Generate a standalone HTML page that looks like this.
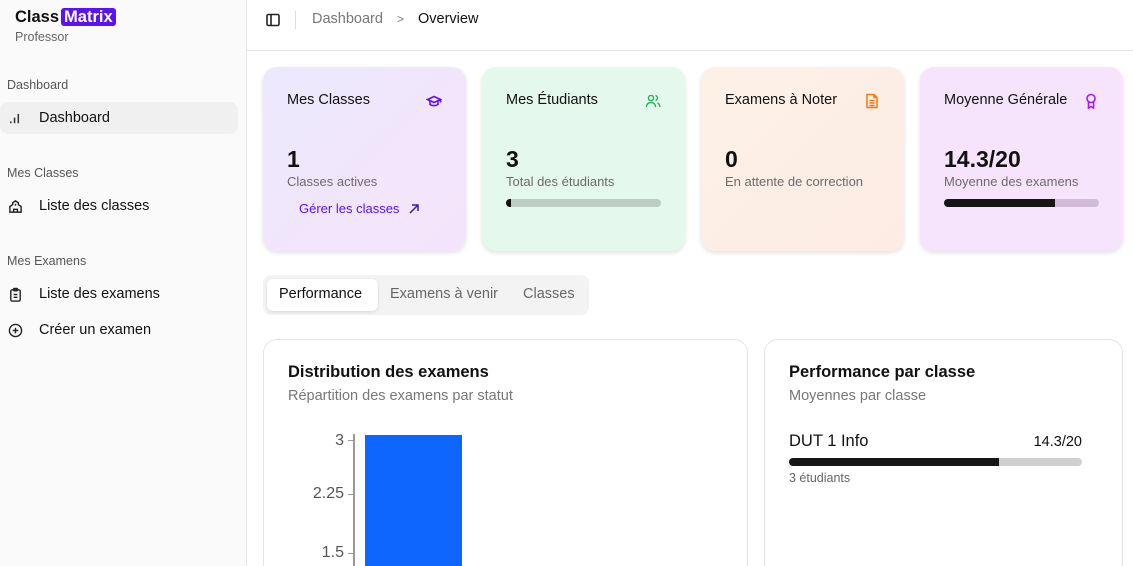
<!DOCTYPE html>
<html style="width:1133px;height:566px;overflow:hidden"><head><meta charset="utf-8"><style>
*{box-sizing:border-box;margin:0;padding:0}
body{width:1133px;height:566px;overflow:hidden;font-family:"Liberation Sans","Noto Sans CJK SC",sans-serif;background:#fff;color:#111;position:relative}
.sb{position:absolute;left:0;top:0;width:247px;height:566px;background:#fafafa;border-right:1px solid #e5e5e5}
.abs{position:absolute}
.logo{left:15px;top:8px;font-weight:bold;font-size:16.5px}
.logo span{background:#5b12f5;color:#fff;border-radius:3px;padding:0 3px;margin-left:2px}
.grp{font-size:12.5px;color:#555;left:7px}
.item{left:0;width:238px;height:32px;font-size:14.5px;display:flex;align-items:center;padding-left:8px}
.item svg{width:15px;height:15px;margin-right:16px}
.card{position:absolute;top:67px;width:203px;height:184px;border-radius:14px;box-shadow:0 2px 5px rgba(0,0,0,.12)}
.card .t{position:absolute;left:24px;top:25px;font-size:14.5px}
.card .ic{position:absolute;right:24px;top:26px;width:16px;height:16px}
.card .n{position:absolute;left:24px;top:79px;font-size:23px;font-weight:bold}
.card .s{position:absolute;left:24px;top:107px;font-size:13px;color:#6b6b6b}
.bar{position:absolute;left:24px;top:132px;width:155px;height:8px;border-radius:4px;overflow:hidden}
.panel{position:absolute;top:339px;border:1px solid #e3e3e3;border-radius:14px;height:240px;background:#fff}
</style></head><body>
<div class="sb">
<div class="abs logo">Class<span>Matrix</span></div>
<div class="abs" style="left:15px;top:30px;font-size:12.5px;color:#666">Professor</div>
<div class="abs grp" style="top:78px">Dashboard</div>
<div class="abs item" style="top:102px;background:#f0f0f0;border-radius:8px"><svg viewBox="0 0 16 16" fill="none" stroke="#333" stroke-width="1.6"><path d="M3 13v-2M7 13V7M11 13V3"/></svg>Dashboard</div>
<div class="abs grp" style="top:166px">Mes Classes</div>
<div class="abs item" style="top:190px"><svg viewBox="0 0 16 16" fill="none" stroke="#222" stroke-width="1.5"><path d="M2 14V8l3-2V4l3-2 3 2v2l3 2v6zM6 14v-3h4v3M8 5v2"/></svg>Liste des classes</div>
<div class="abs grp" style="top:254px">Mes Examens</div>
<div class="abs item" style="top:278px"><svg viewBox="0 0 16 16" fill="none" stroke="#222" stroke-width="1.5"><rect x="3" y="3" width="10" height="12" rx="1.5"/><rect x="6" y="1.5" width="4" height="2.5" rx=".5"/><path d="M6 8h4M6 11h4"/></svg>Liste des examens</div>
<div class="abs item" style="top:314px"><svg viewBox="0 0 16 16" fill="none" stroke="#222" stroke-width="1.5"><circle cx="8" cy="8" r="6.5"/><path d="M8 5v6M5 8h6"/></svg>Créer un examen</div>
</div>
<div class="abs" style="left:247px;top:50px;width:886px;border-top:1px solid #e5e5e5"></div>
<svg class="abs" style="left:265px;top:12px" width="16" height="16" viewBox="0 0 16 16" fill="none" stroke="#222" stroke-width="1.6"><rect x="2" y="2.5" width="12" height="11" rx="1.5"/><path d="M6 2.5v11"/></svg>
<div class="abs" style="left:295px;top:11px;height:18px;border-left:1px solid #ddd"></div>
<div class="abs" style="left:312px;top:11px;font-size:14.5px;color:#777">Dashboard <span style="margin:0 10px;font-size:12px">&gt;</span> <span style="color:#111">Overview</span></div>

<div class="card" style="left:263px;background:linear-gradient(135deg,#ece9fd,#f5e4fb)">
<div class="t">Mes Classes</div>
<svg class="ic" viewBox="0 0 16 16" fill="none" stroke="#5b12f5" stroke-width="1.6"><path d="M1.5 6.5 8 3.5l6.5 3L8 9.5zM4 8v3.5c2.5 1.5 5.5 1.5 8 0V8M14.5 6.5v3"/></svg>
<div class="n">1</div><div class="s">Classes actives</div>
<div class="abs" style="left:36px;top:134px;font-size:13px;color:#5b12f5">Gérer les classes</div>
<svg class="abs" style="left:145px;top:136px" width="12" height="12" viewBox="0 0 12 12" fill="none" stroke="#3b1aa5" stroke-width="1.5"><path d="M2 10 10 2M4 2h6v6"/></svg>
</div>
<div class="card" style="left:482px;background:#e5f8ee">
<div class="t">Mes Étudiants</div>
<svg class="ic" viewBox="0 0 16 16" fill="none" stroke="#22b455" stroke-width="1.4"><circle cx="6" cy="5" r="2.6"/><path d="M1.5 14c0-3 2-4.5 4.5-4.5s4.5 1.5 4.5 4.5M10.5 2.5a2.6 2.6 0 0 1 0 5M12.5 10c1.5.6 2.3 2 2.3 4"/></svg>
<div class="n">3</div><div class="s">Total des étudiants</div>
<div class="bar" style="background:#bccdc4"><div style="width:5px;height:8px;background:#111"></div></div>
</div>
<div class="card" style="left:701px;background:linear-gradient(135deg,#fdf1e6,#fdece4)">
<div class="t">Examens à Noter</div>
<svg class="ic" viewBox="0 0 16 16" fill="none" stroke="#f57a0f" stroke-width="1.5"><path d="M3 1.5h7l3 3v10H3zM10 1.5v3h3M5.5 7.5h5M5.5 10h5M5.5 12.5h5"/></svg>
<div class="n">0</div><div class="s">En attente de correction</div>
</div>
<div class="card" style="left:920px;background:#f6e4fc">
<div class="t">Moyenne Générale</div>
<svg class="ic" viewBox="0 0 16 16" fill="none" stroke="#a21af0" stroke-width="1.6"><circle cx="8" cy="5.5" r="4"/><path d="M5.5 9v6l2.5-1.5 2.5 1.5V9"/></svg>
<div class="n">14.3/20</div><div class="s">Moyenne des examens</div>
<div class="bar" style="background:#d0bcd6"><div style="width:111px;height:8px;background:#161616"></div></div>
</div>

<div class="abs" style="left:263px;top:275px;width:326px;height:40px;background:#f3f3f3;border-radius:8px"></div>
<div class="abs" style="left:267px;top:279px;width:111px;height:32px;background:#fff;border-radius:6px;box-shadow:0 1px 3px rgba(0,0,0,.12)"></div>
<div class="abs" style="left:279px;top:286px;font-size:14.5px">Performance</div>
<div class="abs" style="left:390px;top:286px;font-size:14.5px;color:#666">Examens à venir</div>
<div class="abs" style="left:523px;top:286px;font-size:14.5px;color:#666">Classes</div>

<div class="panel" style="left:263px;width:485px">
<div class="abs" style="left:24px;top:23px;font-size:16.5px;font-weight:bold">Distribution des examens</div>
<div class="abs" style="left:24px;top:48px;font-size:14.5px;color:#777">Répartition des examens par statut</div>
<div class="abs" style="left:89px;top:94px;height:150px;border-left:2px solid #999"></div>
<div class="abs" style="right:403px;top:92px;font-size:16px;color:#555">3</div>
<div class="abs" style="right:403px;top:145px;font-size:16px;color:#555">2.25</div>
<div class="abs" style="right:403px;top:204px;font-size:16px;color:#555">1.5</div>
<div class="abs" style="left:84px;top:100px;width:5px;border-top:1.5px solid #999"></div>
<div class="abs" style="left:84px;top:154px;width:5px;border-top:1.5px solid #999"></div>
<div class="abs" style="left:84px;top:213px;width:5px;border-top:1.5px solid #999"></div>
<div class="abs" style="left:101px;top:95px;width:97px;height:150px;background:#0f66ff"></div>
</div>
<div class="panel" style="left:764px;width:359px">
<div class="abs" style="left:24px;top:23px;font-size:16.5px;font-weight:bold">Performance par classe</div>
<div class="abs" style="left:24px;top:48px;font-size:14.5px;color:#777">Moyennes par classe</div>
<div class="abs" style="left:24px;top:92px;font-size:16.5px">DUT 1 Info</div>
<div class="abs" style="right:40px;top:94px;font-size:14.5px">14.3/20</div>
<div class="abs" style="left:24px;top:118px;width:293px;height:8px;border-radius:4px;background:#d0d0d0;overflow:hidden"><div style="width:210px;height:8px;background:#161616"></div></div>
<div class="abs" style="left:24px;top:131px;font-size:12.5px;color:#666">3 étudiants</div>
</div>
</body></html>
